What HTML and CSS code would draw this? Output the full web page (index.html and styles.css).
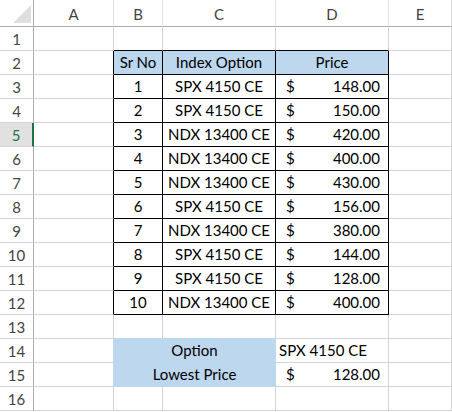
FILE: index.html
```html
<!DOCTYPE html>
<html>
<head>
<meta charset="utf-8">
<link rel="stylesheet" href="styles.css">
</head>
<body>
<div class="sheet">
  <div class="corner"><div class="tri"></div></div>
  <div class="ch">A</div><div class="ch">B</div><div class="ch">C</div><div class="ch">D</div><div class="ch">E</div>

  <div class="rh">1</div><div class="cell"></div><div class="cell bt"></div><div class="cell bt"></div><div class="cell bt"></div><div class="cell"></div>

  <div class="rh">2</div><div class="cell br"></div><div class="cell tb hd c">Sr No</div><div class="cell tb hd c">Index Option</div><div class="cell tb hd c">Price</div><div class="cell"></div>

  <div class="rh">3</div><div class="cell br"></div><div class="cell tb c">1</div><div class="cell tb c">SPX 4150 CE</div><div class="cell tb acc"><span>$</span><span>148.00</span></div><div class="cell"></div>
  <div class="rh">4</div><div class="cell br"></div><div class="cell tb c">2</div><div class="cell tb c">SPX 4150 CE</div><div class="cell tb acc"><span>$</span><span>150.00</span></div><div class="cell"></div>
  <div class="rh sel">5</div><div class="cell br"></div><div class="cell tb c">3</div><div class="cell tb c">NDX 13400 CE</div><div class="cell tb acc"><span>$</span><span>420.00</span></div><div class="cell"></div>
  <div class="rh">6</div><div class="cell br"></div><div class="cell tb c">4</div><div class="cell tb c">NDX 13400 CE</div><div class="cell tb acc"><span>$</span><span>400.00</span></div><div class="cell"></div>
  <div class="rh">7</div><div class="cell br"></div><div class="cell tb c">5</div><div class="cell tb c">NDX 13400 CE</div><div class="cell tb acc"><span>$</span><span>430.00</span></div><div class="cell"></div>
  <div class="rh">8</div><div class="cell br"></div><div class="cell tb c">6</div><div class="cell tb c">SPX 4150 CE</div><div class="cell tb acc"><span>$</span><span>156.00</span></div><div class="cell"></div>
  <div class="rh">9</div><div class="cell br"></div><div class="cell tb c">7</div><div class="cell tb c">NDX 13400 CE</div><div class="cell tb acc"><span>$</span><span>380.00</span></div><div class="cell"></div>
  <div class="rh">10</div><div class="cell br"></div><div class="cell tb c">8</div><div class="cell tb c">SPX 4150 CE</div><div class="cell tb acc"><span>$</span><span>144.00</span></div><div class="cell"></div>
  <div class="rh">11</div><div class="cell br"></div><div class="cell tb c">9</div><div class="cell tb c">SPX 4150 CE</div><div class="cell tb acc"><span>$</span><span>128.00</span></div><div class="cell"></div>
  <div class="rh">12</div><div class="cell br"></div><div class="cell tb c">10</div><div class="cell tb c">NDX 13400 CE</div><div class="cell tb acc"><span>$</span><span>400.00</span></div><div class="cell"></div>

  <div class="rh">13</div><div class="cell"></div><div class="cell bb"></div><div class="cell bb"></div><div class="cell"></div><div class="cell"></div>

  <div class="rh">14</div><div class="cell bl"></div><div class="cell fill fill-top span2 c">Option</div><div class="cell">SPX 4150 CE</div><div class="cell"></div>
  <div class="rh">15</div><div class="cell bl"></div><div class="cell fill span2 c">Lowest Price</div><div class="cell acc"><span>$</span><span>128.00</span></div><div class="cell"></div>

  <div class="rh">16</div><div class="cell"></div><div class="cell"></div><div class="cell"></div><div class="cell"></div><div class="cell"></div>
</div>
</body>
</html>
```

FILE: styles.css
```css
body {
  margin: 0;
  background: #ffffff;
  font-family: Lato, "Liberation Sans", sans-serif;
}

.sheet {
  display: grid;
  grid-template-columns: 34px 80px 49px 113px 113px 63px;
  grid-template-rows: 27px repeat(16, 24px);
  width: 452px;
  height: 412px;
  overflow: hidden;
}

.corner {
  box-sizing: border-box;
  border-right: 1px solid #ababab;
  border-bottom: 1px solid #ababab;
  display: flex;
  justify-content: flex-end;
  align-items: flex-end;
  padding: 0 2px 3px 0;
}

.tri {
  width: 18px;
  height: 18px;
  background: #dfdfdf;
  clip-path: polygon(100% 0, 100% 100%, 0 100%);
}

.ch {
  box-sizing: border-box;
  border-right: 1px solid #e1e1e1;
  border-bottom: 1px solid #ababab;
  display: flex;
  justify-content: center;
  align-items: center;
  padding-top: 1px;
  font-size: 15px;
  color: #444444;
}

.rh {
  box-sizing: border-box;
  border-right: 1px solid #ababab;
  border-bottom: 1px solid #d4d4d4;
  display: flex;
  justify-content: center;
  align-items: center;
  font-size: 15px;
  color: #444444;
}

.rh.sel {
  background: #e1e1e1;
  color: #217346;
  border-right: 2px solid #217346;
  padding-right: 0;
}

.cell {
  box-sizing: border-box;
  border-right: 1px solid #d4d4d4;
  border-bottom: 1px solid #d4d4d4;
  display: flex;
  align-items: flex-end;
  padding: 0 3px 3px 3px;
  font-size: 15px;
  line-height: 18px;
  color: #000000;
  white-space: nowrap;
}

.c {
  justify-content: center;
}

.tb {
  border-right-color: #000000;
  border-bottom-color: #000000;
}

.bt {
  border-bottom-color: #000000;
}

.br {
  border-right-color: #000000;
}

.hd {
  background: #bdd7ee;
}

.acc {
  justify-content: space-between;
  padding-left: 10px;
  padding-right: 8px;
}

.fill {
  background: #bdd7ee;
  border-right-color: #bdd7ee;
  border-bottom-color: #bdd7ee;
}

.span2 {
  grid-column: span 2;
}

.bb {
  border-bottom-color: #bdd7ee;
}

.bl {
  border-right-color: #bdd7ee;
}
```
